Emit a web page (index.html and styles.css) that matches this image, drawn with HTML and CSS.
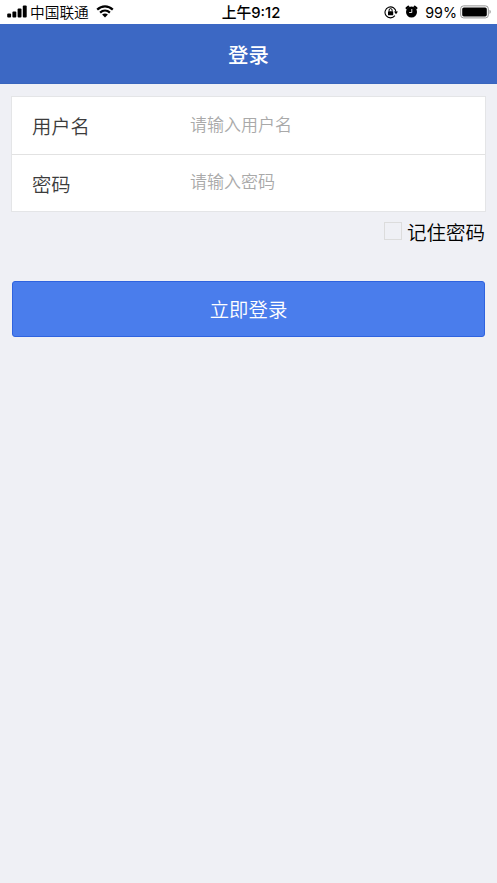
FILE: index.html
```html
<!DOCTYPE html>
<html lang="zh-CN">
<head>
<meta charset="utf-8">
<title>登录</title>
<link rel="stylesheet" href="styles.css">
</head>
<body>
<div class="status">
  <div class="status-left">
    <svg class="signal" width="20" height="13" viewBox="0 0 20 13"><rect x="0.2" y="8.4" width="3.9" height="4.1" rx="1"/><rect x="5.4" y="6.4" width="3.9" height="6.1" rx="1"/><rect x="10.6" y="3.5" width="3.9" height="9" rx="1"/><rect x="15.8" y="0.5" width="3.9" height="12" rx="1"/></svg>
    <span class="carrier">中国联通</span>
    <svg class="wifi" width="18" height="13" viewBox="0 0 18 13"><path d="M1.2 4.6C5.7.3 12.3.3 16.8 4.6M4.1 7.6c2.9-2.7 6.9-2.7 9.8 0" fill="none" stroke="#000" stroke-width="2.2"/><path d="M6.1 9.6c1.7-1.5 4.1-1.5 5.8 0L9 12.5z"/></svg>
  </div>
  <div class="time">上午9:12</div>
  <div class="status-right">
    <svg class="lock" width="14" height="14" viewBox="0 0 14 14"><path d="M10.9 10.7A5.5 5.5 0 1 1 12 7" fill="none" stroke="#000" stroke-width="1.1"/><path d="M10 6.6h4l-2 2.7z"/><rect x="4" y="6.3" width="5.2" height="3.9" rx=".5"/><path d="M5.1 6.3V5.1a1.5 1.5 0 0 1 3 0v1.2" fill="none" stroke="#000"/></svg>
    <svg class="alarm" width="13" height="13" viewBox="0 0 13 13"><circle cx="6.5" cy="7" r="5.5"/><path d="M1.5 3.1 3.4 1.6M11.5 3.1 9.6 1.6" stroke="#000" stroke-width="2" stroke-linecap="round"/><path d="M6.8 4v3.5H4.2" fill="none" stroke="#fff" stroke-width=".9"/></svg>
    <span class="percent">99%</span>
    <svg class="battery" width="32" height="14" viewBox="0 0 32 14"><rect x=".7" y=".9" width="27.6" height="12" rx="2.8" fill="#fff" stroke="#929292" stroke-width="1"/><rect x="2.2" y="2.4" width="24.6" height="9" rx="1.6"/><path d="M29.5 4.8c1.7.7 1.7 3.5 0 4.2z" fill="#929292"/></svg>
  </div>
</div>
<header class="title">登录</header>
<main>
  <form>
    <div class="fields">
      <label class="row"><span class="label">用户名</span><input type="text" placeholder="请输入用户名"></label>
      <label class="row"><span class="label">密码</span><input type="password" placeholder="请输入密码"></label>
    </div>
    <label class="remember"><input type="checkbox"><span>记住密码</span></label>
    <button type="button">立即登录</button>
  </form>
</main>
</body>
</html>
```
FILE: styles.css
```css
* { box-sizing: border-box; }
body {
  margin: 0;
  min-height: 883px;
  background: #eff0f5;
  color: #000;
  font-family: "Noto Sans CJK SC", sans-serif;
  font-weight: 350;
}
svg { display: block; flex: none; }
.status {
  display: grid;
  grid-template-columns: 1fr auto 1fr;
  height: 24px;
  padding: 0 5px 0 7px;
  background: #fff;
  line-height: 24px;
}
.status-left, .status-right { display: flex; align-items: center; height: 24px; }
.status-right { justify-content: flex-end; }
.signal, .wifi { margin-bottom: 1px; }
.carrier { margin-left: 3px; font-size: 14.7px; }
.wifi { margin-left: 7px; }
.time { margin-left: 3px; font: 500 14.8px/26px Inter, "Noto Sans CJK SC", sans-serif; }
.lock, .alarm, .battery { margin-bottom: 1px; }
.alarm { margin-left: 7px; }
.percent { margin: 1px 3px 0 7px; font: 14.3px/24px Inter, sans-serif; }
.title {
  height: 60px;
  border-bottom: 1px solid #3865bd;
  background: #3c68c4;
  color: #fff;
  font-size: 20.4px;
  font-weight: 500;
  line-height: 60px;
  text-align: center;
}
main { padding: 12px 11px 0; }
.fields { border: 1px solid #e4e5e7; background: #fff; }
.row { display: flex; height: 57px; }
.row + .row { border-top: 1px solid #e2e2e2; }
.label {
  width: 178px;
  padding-left: 20px;
  color: #3c3c3c;
  font-size: 19.3px;
  line-height: 58px;
}
.row input {
  flex: 1;
  min-width: 0;
  height: 52px;
  padding: 0;
  border: 0;
  outline: 0;
  background: transparent;
  font: 350 17px "Noto Sans CJK SC", sans-serif;
}
.row + .row input { height: 51px; }
.row input::placeholder { color: #a9a9a9; opacity: 1; }
.remember {
  display: flex;
  align-items: center;
  justify-content: flex-end;
  height: 38px;
  padding-right: 1px;
  font-size: 19.5px;
}
.remember input {
  width: 18px;
  height: 18px;
  margin: 0 5px 1px 0;
  border: 1px solid #dcdcdc;
  appearance: none;
}
button {
  display: block;
  width: 473px;
  height: 56px;
  margin: 31px 0 0 1px;
  padding: 0 0 1px;
  border: 1px solid #2f63df;
  border-radius: 3px;
  background: #4a7dec;
  color: #fff;
  font: 350 19.4px "Noto Sans CJK SC", sans-serif;
}
```
